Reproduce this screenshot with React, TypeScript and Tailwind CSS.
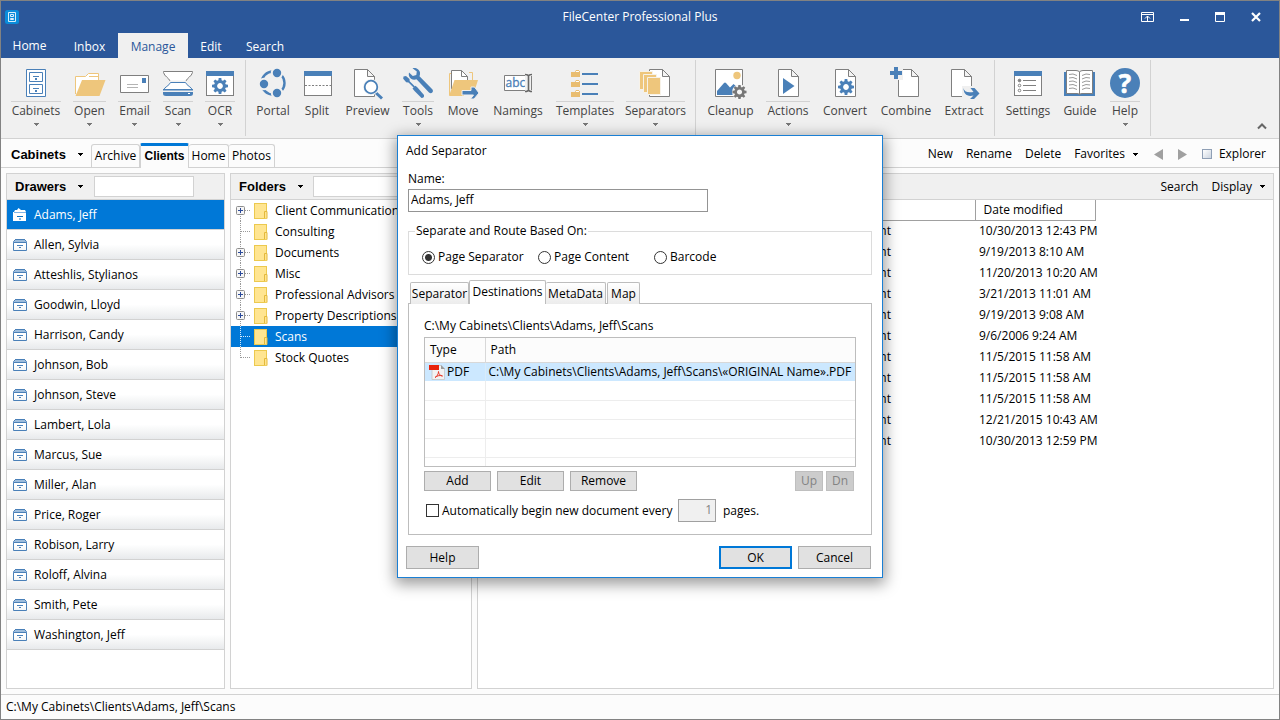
import React from "react";

const BLUE = "#4a80b8";
const GRAY = "#7f7f7f";
const SAND = "#eec67c";

type GearProps = { cx: number; cy: number; s?: number; color: string };

function Gear({ cx, cy, s = 1, color }: GearProps) {
  return (
    <g transform={`translate(${cx} ${cy}) scale(${s})`} fill={color}>
      <circle r="4.4" fill="none" stroke={color} strokeWidth="3" />
      {[0, 45, 90, 135, 180, 225, 270, 315].map((a) => (
        <path key={a} d="M-1.7 -5 L-1.3 -8 H1.3 L1.7 -5z" transform={`rotate(${a})`} />
      ))}
    </g>
  );
}

function Page({ x, y = 2 }: { x: number; y?: number }) {
  return (
    <g transform={`translate(${x} ${y})`} stroke={GRAY}>
      <path d="M.5 .5H13.5L20.5 7.5V27.5H.5z" fill="#fff" />
      <path d="M13.5 .5V7.5H20.5z" fill="#f4f4f4" />
    </g>
  );
}

function Frame({ x }: { x: number }) {
  return (
    <g>
      <rect x={x + 0.5} y="4.5" width="27" height="24" fill="#fff" stroke={GRAY} />
      <rect x={x} y="4" width="28" height="5" fill={BLUE} />
    </g>
  );
}

const icons: Record<string, React.ReactNode> = {
  Cabinets: (
    <g fill="none" stroke={BLUE}>
      <path d="M6.5 2.5h19v27h-19z" fill="#fff" />
      <path d="M9.5 5.5h13v9h-13zM9.5 17.5h13v9h-13zM13 9.5h6M13 21.5h6" />
      <path d="M15 11h2v2h-2zM15 23h2v2h-2z" fill={BLUE} stroke="none" />
    </g>
  ),
  Open: (
    <g>
      <path d="M1.5 27V9.5H11.5L14.5 6.5H24.5V14" fill="#fff" stroke={SAND} />
      <path d="M15 9.5H24" stroke={SAND} />
      <path d="M8 13H31.5L25.5 29H1.5z" fill={SAND} />
    </g>
  ),
  Email: (
    <g>
      <path d="M1.5 8.5h28v17h-28z" fill="#fff" stroke={GRAY} />
      <path d="M23 11h4v5h-4z" fill={BLUE} />
      <path d="M8 17.5h11M8 20.5h11" stroke="#b4b4b4" />
    </g>
  ),
  Scan: (
    <g fill="none">
      <path d="M8.5 14.5C6.5 10.5 2.5 9.5 1.5 5.5V4.5H30.5V5.5C29.5 9.5 25.5 10.5 23.5 14.5z" fill="#fff" stroke={GRAY} />
      <path d="M8 14.5h16" stroke="#f0f0f0" strokeWidth="2" />
      <path d="M8.5 15.5H23.5C25 19 29.5 20 30 22.5H2C2.5 20 7 19 8.5 15.5z" fill="#fff" stroke={BLUE} />
      <path d="M1 22H31V23.5H1zM1 25H31V26.5Q31 29 28 29H4Q1 29 1 26.5z" fill={BLUE} />
      <path d="M26 26.5h2" stroke="#fff" />
    </g>
  ),
  OCR: (
    <g>
      <Frame x={2} />
      <Gear cx={16} cy={19} color={BLUE} />
    </g>
  ),
  Portal: (
    <g>
      <circle cx="16" cy="16" r="11.5" fill="none" stroke={BLUE} strokeWidth="2.4" />
      <g fill={BLUE} stroke="#f0f0f0" strokeWidth="2">
        <circle cx="20" cy="6" r="5.2" />
        <circle cx="7" cy="17" r="5.2" />
        <circle cx="20" cy="26" r="5.2" />
      </g>
    </g>
  ),
  Split: (
    <g>
      <Frame x={3} />
      <path d="M4 18.5h26" stroke={GRAY} strokeDasharray="2 1.5" />
    </g>
  ),
  Preview: (
    <g>
      <Page x={2} />
      <path d="M23 24L30 32" stroke="#f0f0f0" strokeWidth="5" />
      <path d="M22.5 24.5L30 31.5" stroke={BLUE} strokeWidth="3" />
      <circle cx="19" cy="20" r="8" fill="#f4f4f4" />
      <circle cx="19" cy="20" r="6.3" fill="#fff" stroke={BLUE} strokeWidth="1.8" />
    </g>
  ),
  Tools: (
    <g fill={BLUE}>
      <path d="M10.5 1.2C13.5 .2 17.5 2 18 5.5Q18.2 7.5 17.5 9.2L30.5 22.5Q31.5 24 30.5 25.3Q29 27 27 25.6L14.5 12.2C11.5 13.4 8 12 7 9Q6.500 7 7 5.5L10.800 9L14.300 8L14.800 4.600z" />
      <path d="M1.5 9.5L4 9L7.500 12L7.700 14.300L13 19.500L11.800 20.700L6.500 15.400L4.200 15.200L1.200 11.700z" />
      <path d="M10.500 21.500L13.500 18.800L15.500 20.500L22 28Q22.500 31 19.500 31L12.500 24z" />
    </g>
  ),
  Move: (
    <g>
      <path d="M2.500 28V6.500H6.500M22 5.500H25.500V14" fill="none" stroke={SAND} />
      <path d="M4.500 22V3.500H14.500L20.500 9.500V15" fill="#fff" stroke={GRAY} />
      <path d="M14.500 3.500V9.500H20.500" fill="none" stroke={GRAY} />
      <path d="M7.500 13H31L27.500 24H17V29H2z" fill={SAND} />
      <path d="M15 23.500H24V20H27.500L32 26L27 32H23.500L26.500 28H15z" fill={BLUE} stroke="#f0f0f0" strokeWidth="1" />
    </g>
  ),
  Namings: (
    <g>
      <path d="M2.500 8.500h27v15h-27z" fill="#fff" stroke={GRAY} />
      <text x="3.500" y="19.500" fill={BLUE} stroke={BLUE} strokeWidth=".3" fontSize="12">
        abc
      </text>
      <path d="M23 6h8v20h-8z" fill="#f0f0f0" />
      <path d="M23 7.500Q26 7.500 26.500 9Q27 7.500 30 7.500M26.500 8V23M23 24.500Q26 24.500 26.500 23Q27 24.500 30 24.500" fill="none" stroke="#666" strokeWidth="1.600" />
      <path d="M29.500 9v14" stroke={GRAY} />
    </g>
  ),
  Templates: (
    <g>
      {[3, 13, 23].map((y) => (
        <g key={y}>
          <path d={`M2 ${y + 2}h4l1-2h3v1h1v6H2z`} fill="#e9bd70" />
          <path d={`M7 ${y + 1.5}h3`} stroke="#fff" />
          <path d={`M13 ${y + 4}h16`} stroke={BLUE} strokeWidth="2" />
        </g>
      ))}
    </g>
  ),
  Separators: (
    <g>
      <Page x={9} />
      <g fill={SAND} stroke="#f7f2e8">
        <path d="M-.5 4.500h13v18h-13z" />
        <path d="M3.500 7.500h13v18h-13z" />
        <path d="M7.500 10.500h13v17h-13z" />
      </g>
    </g>
  ),
  Cleanup: (
    <g>
      <path d="M.5 2.500h27v27H.5z" fill="#fff" stroke={GRAY} />
      <circle cx="22" cy="8.500" r="3.700" fill={SAND} />
      <path d="M2 28V24L9 16Q10 15 11 16L15 20.500L18.500 17L22 20V28z" fill={BLUE} />
      <circle cx="24.500" cy="25" r="7.500" fill="#f4f4f4" />
      <Gear cx={24.500} cy={25} s={0.88} color="#777" />
    </g>
  ),
  Actions: (
    <g>
      <Page x={6} />
      <path d="M11 11V27L22.500 19z" fill={BLUE} />
    </g>
  ),
  Convert: (
    <g>
      <Page x={6} />
      <circle cx="17" cy="20" r="9" fill="#fff" />
      <Gear cx={17} cy={20} color={BLUE} />
    </g>
  ),
  Combine: (
    <g>
      <Page x={8} />
      <path d="M-1 0h14v13H-1z" fill="#f0f0f0" />
      <path d="M4 0h4v4h4v4H8v4H4V8H0V4h4z" fill={BLUE} />
    </g>
  ),
  Extract: (
    <g>
      <Page x={3} />
      <path d="M14 19h20v13H14z" fill="#f0f0f0" />
      <path d="M15.500 21C16 24.500 19 26 25.500 25L22.500 21H26.500L31.500 26.500L26 32H22L25.500 28.500C19 30 15.500 27 15.500 21z" fill={BLUE} />
    </g>
  ),
  Settings: (
    <g>
      <Frame x={2} />
      <path d="M11 13.500h13M11 18.500h13M11 23.500h13" stroke={GRAY} />
      <g fill="#fff" stroke={GRAY}>
        <circle cx="7.500" cy="13.500" r="1.300" fill={GRAY} />
        <circle cx="7.500" cy="18.500" r="1.300" />
        <circle cx="7.500" cy="23.500" r="1.300" />
      </g>
    </g>
  ),
  Guide: (
    <g>
      <path d="M0 5h31v24H0z" fill={BLUE} />
      <path d="M2.500 3.500H12Q15.500 3.500 15.500 5.500Q15.500 3.500 19 3.500H28.500V26.500H18Q15.500 26.500 15.500 28Q15.500 26.500 13 26.500H2.500z" fill="#fff" stroke={GRAY} />
      <path d="M15.500 5V28" stroke={GRAY} />
      <path
        d="M5 7.500Q9 6 13 8.500M5 11Q9 9.500 13 12M5 14.500Q9 13 13 15.500M5 18Q9 16.500 13 19M5 21.500Q9 20 13 22.500M18 8.500Q22 6 26 7.500M18 12Q22 9.500 26 11M18 15.500Q22 13 26 14.500M18 19Q22 16.500 26 18M18 22.500Q22 20 26 21.500"
        fill="none"
        stroke="#999"
      />
    </g>
  ),
  Help: (
    <g>
      <circle cx="16" cy="16" r="15" fill={BLUE} />
      <text x="16" y="25.500" fill="#fff" stroke="#fff" strokeWidth=".6" fontSize="26" fontWeight="bold" textAnchor="middle">
        ?
      </text>
    </g>
  ),
};

type Item = { label: string; w: string; menu?: boolean };

const groups: { pad: string; items: Item[] }[] = [
  {
    pad: "pl-[10px]",
    items: [
      { label: "Cabinets", w: "w-[50px]", menu: true },
      { label: "Open", w: "w-[33px]", menu: true },
      { label: "Email", w: "w-[33px]", menu: true },
      { label: "Scan", w: "w-[30px]", menu: true },
      { label: "OCR", w: "w-[30px]", menu: true },
    ],
  },
  {
    pad: "pl-[11px]",
    items: [
      { label: "Portal", w: "w-[32px]" },
      { label: "Split", w: "w-[32px]" },
      { label: "Preview", w: "w-[45px]" },
      { label: "Tools", w: "w-[32px]", menu: true },
      { label: "Move", w: "w-[34px]" },
      { label: "Namings", w: "w-[52px]" },
      { label: "Templates", w: "w-[58px]", menu: true },
      { label: "Separators", w: "w-[59px]", menu: true },
    ],
  },
  {
    pad: "pl-[11px]",
    items: [
      { label: "Cleanup", w: "w-[47px]" },
      { label: "Actions", w: "w-[44px]", menu: true },
      { label: "Convert", w: "w-[46px]" },
      { label: "Combine", w: "w-[52px]" },
      { label: "Extract", w: "w-[40px]" },
    ],
  },
  {
    pad: "pl-[11px]",
    items: [
      { label: "Settings", w: "w-[44px]" },
      { label: "Guide", w: "w-[36px]" },
      { label: "Help", w: "w-[30px]", menu: true },
    ],
  },
];

function Caret({ className = "text-black" }: { className?: string }) {
  return (
    <svg className={`h-[3px] w-[5px] shrink-0 ${className}`} viewBox="0 0 5 3" shapeRendering="crispEdges">
      <path d="M0 0h5v1H4v1H3v1H2V2H1V1H0z" fill="currentColor" />
    </svg>
  );
}

function Ribbon() {
  return (
    <div className="flex h-[81px] shrink-0 border-b border-[#d2d2d2] bg-[#f0f0f0] pt-[2px] pb-[2px]">
      {groups.map((g, i) => (
        <div key={i} className={`flex shrink-0 gap-3 border-r border-[#d2d2d2] pr-[10px] ${g.pad}`}>
          {g.items.map((it) => (
            <button key={it.label} type="button" className={`flex shrink-0 flex-col items-center pt-[7px] text-[#444] ${it.w}`}>
              <svg className="h-[34px] w-8 shrink-0 overflow-visible" viewBox="0 0 32 34">
                {icons[it.label]}
              </svg>
              <span className={`h-px w-full ${it.menu ? "bg-[#d2d2d2]" : ""}`} />
              <span className="h-[18px] whitespace-nowrap leading-[18px]">{it.label}</span>
              {it.menu && (
                <span className="flex h-[9px] items-center">
                  <Caret className="text-[#777]" />
                </span>
              )}
            </button>
          ))}
        </div>
      ))}
      <button type="button" aria-label="Collapse ribbon" className="mr-3 mb-1 ml-auto self-end">
        <svg className="h-3 w-[10px]" viewBox="0 0 10 12">
          <path d="M1 8.500L5 4.500L9 8.500" fill="none" stroke="#666" strokeWidth="2" />
        </svg>
      </button>
    </div>
  );
}

function TitleBar() {
  return (
    <header className="shrink-0 bg-[#2b579a] text-white">
      <div className="grid h-[32px] grid-cols-[1fr_auto_1fr] items-center">
        <svg className="ml-1 h-[14px] w-[14px]" viewBox="0 0 14 14">
          <rect width="14" height="14" rx="2.500" fill="#0a8ddb" />
          <path d="M3.500 2.500h7v9h-7zM5.500 4.500h3v2h-3zM5.500 8.500h3v1h-3z" fill="none" stroke="#d9eefb" />
        </svg>
        <h1>FileCenter Professional Plus</h1>
        <div className="mr-[18px] flex items-center gap-[26px] justify-self-end pb-px">
          <button type="button" aria-label="Ribbon display options">
            <svg className="block h-[10px] w-[13px]" viewBox="0 0 13 10">
              <path d="M.5 .5h12v9H.5zM.5 2.500h12M6.500 9V4M4 6.500L6.500 4L9 6.500" fill="none" stroke="#fff" />
            </svg>
          </button>
          <button type="button" aria-label="Minimize">
            <svg className="block h-[10px] w-[9px]" viewBox="0 0 9 10">
              <path d="M0 7h9v2H0z" fill="#fff" />
            </svg>
          </button>
          <button type="button" aria-label="Maximize">
            <svg className="block h-[10px] w-[10px]" viewBox="0 0 10 10">
              <path d="M.5 .5h9v9h-9z" fill="none" stroke="#fff" />
              <path d="M0 0h10v3H0z" fill="#fff" />
            </svg>
          </button>
          <button type="button" aria-label="Close">
            <svg className="block h-[10px] w-[10px]" viewBox="0 0 10 10">
              <path d="M1 1L9 9M9 1L1 9" fill="none" stroke="#fff" strokeWidth="2.200" />
            </svg>
          </button>
        </div>
      </div>
      <nav className="flex h-[25px] items-stretch">
        <button type="button" className="w-[57px]">Home</button>
        <button type="button" className="ml-[3px] w-[57px] pt-[3px]">Inbox</button>
        <button type="button" className="w-[70px] bg-[#f0f0f0] pt-[3px] text-[#2b579a]">Manage</button>
        <button type="button" className="w-[46px] pt-[3px]">Edit</button>
        <button type="button" className="w-[62px] pt-[3px]">Search</button>
      </nav>
    </header>
  );
}

function CabinetBar() {
  return (
    <div className="flex h-[29px] shrink-0 items-end border-b border-[#d2d2d2] bg-[#fcfcfc]">
      <button type="button" className="ml-[10px] flex h-full w-[80px] items-center gap-3 pt-[3px]">
        <b className="font-['Liberation_Sans',Arial,sans-serif] text-[13px]">Cabinets</b>
        <Caret />
      </button>
      <div className="-mb-px flex items-end border-b border-transparent">
        <button type="button" className="h-[23px] w-[49px] rounded-t-[3px] border border-b-0 border-[#d2d2d2]">Archive</button>
        <button type="button" className="-mb-px h-[25px] w-[49px] rounded-t-[2px] border-x border-t-3 border-x-[#d2d2d2] border-t-[#0078d7] bg-[#fcfcfc] pb-[3px] font-['Liberation_Sans',Arial,sans-serif] font-bold">
          Clients
        </button>
        <button type="button" className="h-[23px] w-[40px] rounded-t-[3px] border-t border-r border-[#d2d2d2]">Home</button>
        <button type="button" className="h-[23px] w-[46px] rounded-t-[3px] border-t border-r border-[#d2d2d2]">Photos</button>
      </div>
      <div className="mr-[13px] ml-auto flex h-full items-center pt-[2px]">
        <button type="button" className="mr-[13px]">New</button>
        <button type="button" className="mr-[13px]">Rename</button>
        <button type="button" className="mr-[13px]">Delete</button>
        <button type="button" className="mr-4 flex items-center gap-2">
          Favorites <Caret />
        </button>
        <button type="button" aria-label="Back" className="mr-[15px]">
          <svg className="block h-[11px] w-[9px]" viewBox="0 0 9 11">
            <path d="M9 0V11L0 5.500z" fill="#a0a0a0" />
          </svg>
        </button>
        <button type="button" aria-label="Forward" className="mr-[15px]">
          <svg className="block h-[11px] w-[9px]" viewBox="0 0 9 11">
            <path d="M0 0V11L9 5.500z" fill="#a0a0a0" />
          </svg>
        </button>
        <label className="flex items-center gap-[7px]">
          <input type="checkbox" className="h-[10px] w-[10px] appearance-none border border-[#8f9fb5] bg-linear-to-br from-white to-[#ccd5e0]" />
          Explorer
        </label>
      </div>
    </div>
  );
}

const drawers = [
  "Adams, Jeff", "Allen, Sylvia", "Atteshlis, Stylianos", "Goodwin, Lloyd", "Harrison, Candy",
  "Johnson, Bob", "Johnson, Steve", "Lambert, Lola", "Marcus, Sue", "Miller, Alan",
  "Price, Roger", "Robison, Larry", "Roloff, Alvina", "Smith, Pete", "Washington, Jeff",
];

function DrawerIcon({ open }: { open: boolean }) {
  return (
    <svg className="h-[14px] w-[14px] shrink-0" viewBox="0 0 14 14">
      {open ? (
        <g>
          <path d="M1 4L2 2H4L5.500 0L8 2H12L13 4V13H0V4z" fill="#fff" />
          <path d="M1 4.500H13" stroke="#7fb4e6" />
          <path d="M4 8.500h6M6 11h2" stroke="#0a6fc2" />
        </g>
      ) : (
        <g fill="none" stroke={BLUE}>
          <path d="M.5 4.500h13v8H.5zM2 1.500h10" />
          <path d="M1 3h12" stroke="#9dbcdb" strokeWidth="2" />
          <path d="M.5 4.500V3.500L2.500 1.500M13.500 4.500V3.500L11.500 1.500M4 7.500h6M6 9.500h2" />
        </g>
      )}
    </svg>
  );
}

function PanelHead({ title, label, inputClass }: { title: string; label: string; inputClass: string }) {
  return (
    <div className="flex h-[26px] shrink-0 items-center border-b border-[#d2d2d2] bg-[#f0f0f0] pl-2">
      <button type="button" className="flex items-center gap-3">
        <b className="font-['Liberation_Sans',Arial,sans-serif] text-[13px]">{title}</b>
        <Caret />
      </button>
      <input type="text" aria-label={label} className={`h-[21px] border border-[#d2d2d2] bg-white px-1 outline-none ${inputClass}`} />
    </div>
  );
}

function Drawers() {
  return (
    <section className="flex w-[219px] shrink-0 flex-col border border-[#d2d2d2] bg-white">
      <PanelHead title="Drawers" label="Filter drawers" inputClass="ml-[11px] w-[100px]" />
      <ul>
        {drawers.map((d, i) => (
          <li
            key={d}
            className={
              "flex h-[30px] items-center gap-[7px] border-b border-[#d2d2d2] pl-[6px] " +
              (i === 0 ? "bg-[#0078d7] text-white" : "bg-linear-to-b from-white from-50% to-[#e8eaec]")
            }
          >
            <DrawerIcon open={i === 0} />
            {d}
          </li>
        ))}
      </ul>
    </section>
  );
}

const folders: [string, boolean][] = [
  ["Client Communications", true],
  ["Consulting", false],
  ["Documents", true],
  ["Misc", true],
  ["Professional Advisors", true],
  ["Property Descriptions", true],
  ["Scans", false],
  ["Stock Quotes", false],
];

function Folders() {
  return (
    <section className="flex w-[242px] shrink-0 flex-col border border-[#d2d2d2] bg-white">
      <PanelHead title="Folders" label="Filter folders" inputClass="ml-[10px] mr-8 min-w-0 flex-1" />
      <ul>
        {folders.map(([name, plus], i) => (
          <li key={name} className={`flex h-[21px] items-center pl-[5px] ${name === "Scans" ? "bg-[#0078d7] text-white" : ""}`}>
            <svg className="h-[21px] w-[32px] shrink-0" viewBox="0 0 32 21">
              <path
                d={`M4.500 ${i === 0 ? 10 : 0}V${i === folders.length - 1 ? 11 : 21}M5 10.500H14`}
                fill="none"
                stroke={name === "Scans" ? "#d8ebfa" : "#999"}
                strokeDasharray="1 1"
              />
              {plus && (
                <g>
                  <rect x=".5" y="6.500" width="8" height="8" rx="1" fill="#f6f6f6" stroke="#8e8e8e" />
                  <path d="M2 10.500h5M4.500 8v5" stroke="#2b4a9a" />
                </g>
              )}
              <rect x="18.500" y="3.500" width="12" height="15" fill="#ffe591" stroke="#ecc94e" />
              <path d="M28.500 18V11.500h2.500V18.500" fill="#ffe591" stroke="#e4b93c" />
            </svg>
            <span className="ml-[7px] whitespace-nowrap">{name}</span>
          </li>
        ))}
      </ul>
    </section>
  );
}

const dates = [
  "10/30/2013 12:43 PM", "9/19/2013 8:10 AM", "11/20/2013 10:20 AM", "3/21/2013 11:01 AM",
  "9/19/2013 9:08 AM", "9/6/2006 9:24 AM", "11/5/2015 11:58 AM", "11/5/2015 11:58 AM",
  "11/5/2015 11:58 AM", "12/21/2015 10:43 AM", "10/30/2013 12:59 PM",
];

function Files() {
  return (
    <section className="flex min-w-0 flex-1 flex-col border border-[#d2d2d2] bg-white">
      <div className="flex h-[26px] shrink-0 items-center justify-end gap-[13px] border-b border-[#d2d2d2] bg-[#f0f0f0] pr-2">
        <button type="button">Search</button>
        <button type="button" className="flex items-center gap-2">
          Display <Caret />
        </button>
      </div>
      <table className="w-[618px] table-fixed border-collapse">
        <thead>
          <tr className="h-[20px]">
            <th className="w-[497px] border-r border-b border-[#a0a0a0] p-0" />
            <th className="border-r border-b border-[#a0a0a0] p-0 pl-2 text-left leading-[18px] font-normal">Date modified</th>
          </tr>
        </thead>
        <tbody>
          {dates.map((d, i) => (
            <tr key={i} className="h-[21px]">
              <td className="p-0 pr-[84px] text-right">Document</td>
              <td className="p-0 pl-1 whitespace-nowrap">{d}</td>
            </tr>
          ))}
        </tbody>
      </table>
    </section>
  );
}

const btn = "border border-[#adadad] bg-[#e1e1e1] text-center";

function Radio({ label, checked }: { label: string; checked?: boolean }) {
  return (
    <label className="flex w-[116px] items-center gap-[3px]">
      <input
        type="radio"
        name="route"
        defaultChecked={checked}
        className="h-[13px] w-[13px] appearance-none rounded-full border border-[#333] bg-white checked:bg-[radial-gradient(circle,#333_0_3px,#fff_4px)]"
      />
      {label}
    </label>
  );
}

function PdfIcon() {
  return (
    <svg className="h-4 w-4 shrink-0" viewBox="0 0 16 16">
      <path d="M3 1.500H12L15.500 5V15.500H3z" fill="#f2f2f2" stroke="#c4c4c4" strokeWidth=".8" />
      <path d="M12 1L16 5H12z" fill="#9a9a9a" />
      <path d="M0 1h10v5H0z" fill="#e8230b" />
      <path d="M6 13.500C8 12.500 9.500 10 9.500 7.500C9.500 10 11 11.500 13.500 12C11 11 8.500 11.500 6 13.500z" fill="none" stroke="#e8392a" />
    </svg>
  );
}

function Dialog() {
  const tab = "h-[22px] rounded-t-[2px] border border-b-0 border-[#bdbdbd] bg-linear-to-b from-white to-[#ececec]";
  return (
    <div className="absolute inset-x-0 top-[134px] flex justify-center">
      <div role="dialog" aria-labelledby="dialog-title" className="flex w-[486px] flex-col border border-[#1a7fd4] bg-white pb-2 shadow-[0_4px_14px_2px_rgba(0,0,0,0.4)]">
        <h2 id="dialog-title" className="px-2 pt-[6px] leading-[18px]">Add Separator</h2>
        <div className="flex flex-col px-[10px] pt-[10px]">
          <label htmlFor="sep-name" className="leading-[18px]">Name:</label>
          <input id="sep-name" type="text" defaultValue="Adams, Jeff" className="mt-px h-[23px] w-[300px] border border-[#949494] bg-white px-[2px] pb-[2px] outline-none" />
          <fieldset className="mt-[10px] h-[53px] border border-[#dcdcdc] pl-[6px]">
            <legend className="px-px leading-[18px]">Separate and Route Based On:</legend>
            <div className="flex pt-2 pl-[7px]">
              <Radio label="Page Separator" checked />
              <Radio label="Page Content" />
              <Radio label="Barcode" />
            </div>
          </fieldset>
          <div className="z-10 -mb-px mt-[5px] flex items-end pl-[2px]">
            <button type="button" className={`${tab} w-[59px]`}>Separator</button>
            <button type="button" className="h-6 w-[77px] rounded-t-[2px] border border-b-0 border-[#bdbdbd] bg-white pb-px">Destinations</button>
            <button type="button" className={`${tab} w-[60px] border-l-0`}>MetaData</button>
            <button type="button" className={`${tab} ml-px w-[33px]`}>Map</button>
          </div>
          <div className="flex flex-col border border-[#bdbdbd] px-[15px] pt-[13px] pb-3">
            <p className="leading-[18px]">C:\My Cabinets\Clients\Adams, Jeff\Scans</p>
            <div className="mt-[2px] h-[130px] overflow-hidden border border-[#bdbdbd]">
              <table className="w-full table-fixed border-collapse">
                <thead>
                  <tr className="h-6 border-b border-[#d8d8d8] bg-[#fcfcfc]">
                    <th className="w-[60px] border-r border-[#d8d8d8] p-0 pl-[5px] text-left font-normal">Type</th>
                    <th className="p-0 pl-[5px] text-left font-normal">Path</th>
                  </tr>
                </thead>
                <tbody>
                  <tr className="h-[19px] bg-[#cce8ff]">
                    <td className="border-r border-[#d9ecfa] p-0 pl-1">
                      <span className="flex items-center gap-[2px] leading-[18px]">
                        <PdfIcon />
                        PDF
                      </span>
                    </td>
                    <td className="p-0 pl-[3px] leading-[18px] whitespace-nowrap">C:\My Cabinets\Clients\Adams, Jeff\Scans\«ORIGINAL Name».PDF</td>
                  </tr>
                  {[0, 1, 2, 3, 4].map((r) => (
                    <tr key={r} className="h-[19px] border-b border-[#ededed]">
                      <td className="border-r border-[#ededed] p-0" />
                      <td className="p-0" />
                    </tr>
                  ))}
                </tbody>
              </table>
            </div>
            <div className="mt-1 flex h-5 gap-[6px]">
              <button type="button" className={`${btn} w-[67px]`}>Add</button>
              <button type="button" className={`${btn} w-[67px]`}>Edit</button>
              <button type="button" className={`${btn} w-[67px]`}>Remove</button>
              <div className="mr-[2px] ml-auto flex gap-[3px]">
                <button type="button" disabled className="w-7 border border-[#bfbfbf] bg-[#cccccc] text-[#838383]">Up</button>
                <button type="button" disabled className="w-7 border border-[#bfbfbf] bg-[#cccccc] text-[#838383]">Dn</button>
              </div>
            </div>
            <div className="mt-2 flex items-center pl-[2px]">
              <label className="flex w-[252px] items-center gap-[3px] whitespace-nowrap">
                <input type="checkbox" className="h-[13px] w-[13px] appearance-none border border-[#333] bg-white" />
                Automatically begin new document every
              </label>
              <input type="text" disabled aria-label="Pages per document" defaultValue="1" className="h-[23px] w-[38px] border border-[#a0a0a0] bg-[#f0f0f0] px-[3px] pb-[2px] text-right text-[#838383]" />
              <span className="ml-[7px]">pages.</span>
            </div>
          </div>
        </div>
        <div className="mt-[11px] flex h-[23px] gap-[6px] px-[8px]">
          <button type="button" className={`${btn} w-[73px]`}>Help</button>
          <button type="button" className="ml-auto w-[73px] border-2 border-[#0078d7] bg-[#e1e1e1]">OK</button>
          <button type="button" className={`${btn} mr-[3px] w-[73px]`}>Cancel</button>
        </div>
      </div>
    </div>
  );
}

export default function App() {
  return (
    <div className="relative flex min-h-screen flex-col overflow-hidden border border-[#828282] bg-[#fcfcfc] font-['Open_Sans','Noto_Sans',sans-serif] text-[12px] leading-[18px] text-black">
      <TitleBar />
      <Ribbon />
      <CabinetBar />
      <main className="flex flex-1 gap-[5px] p-[5px]">
        <Drawers />
        <Folders />
        <Files />
      </main>
      <footer className="h-[25px] shrink-0 border-t border-[#d2d2d2] pl-[5px] leading-[24px]">C:\My Cabinets\Clients\Adams, Jeff\Scans</footer>
      <Dialog />
    </div>
  );
}
